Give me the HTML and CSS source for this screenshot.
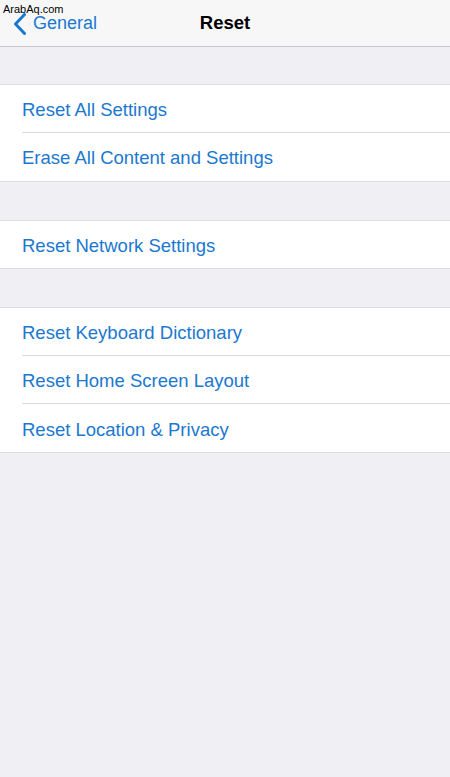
FILE: index.html
```html
<!DOCTYPE html>
<html>
<head>
<meta charset="utf-8">
<link rel="stylesheet" href="styles.css">
</head>
<body>
<div class="watermark">ArabAq.com</div>
<header class="nav">
  <div class="back">
    <svg class="chev" width="14" height="22" viewBox="0 0 14 22"><path d="M11.5 1.5 L2.5 11 L11.5 20.5" fill="none" stroke="#1b78d0" stroke-width="3" stroke-linecap="round" stroke-linejoin="round"/></svg>
    <span>General</span>
  </div>
  <div class="title">Reset</div>
</header>
<main class="content">
  <section class="group">
    <div class="row">Reset All Settings</div>
    <div class="row">Erase All Content and Settings</div>
  </section>
  <section class="group">
    <div class="row">Reset Network Settings</div>
  </section>
  <section class="group">
    <div class="row">Reset Keyboard Dictionary</div>
    <div class="row">Reset Home Screen Layout</div>
    <div class="row">Reset Location &amp; Privacy</div>
  </section>
</main>
</body>
</html>
```
FILE: styles.css
```css
html, body {
  margin: 0;
  padding: 0;
  background: #efeff4;
  font-family: "Liberation Sans", Arial, sans-serif;
  width: 450px;
  height: 777px;
  overflow: hidden;
}
.watermark {
  position: absolute;
  left: 3px;
  top: 3px;
  font-size: 11px;
  color: #000;
  z-index: 2;
}
.nav {
  height: 46px;
  background: #f7f7f8;
  border-bottom: 1px solid #c9c8cd;
  display: flex;
  align-items: center;
  justify-content: center;
  position: relative;
}
.back {
  position: absolute;
  left: 13px;
  top: 0;
  height: 46px;
  display: flex;
  align-items: center;
  gap: 6px;
  color: #1b78d0;
  font-size: 18px;
}
.chev { margin-top: 1px; }
.title {
  font-weight: bold;
  font-size: 18.5px;
  color: #000;
}
.content {
  padding-top: 37px;
  display: flex;
  flex-direction: column;
  gap: 38px;
}
.group {
  background: #fff;
  border-top: 1px solid #dcdce0;
  border-bottom: 1px solid #dcdce0;
}
.row {
  box-sizing: border-box;
  height: 47px;
  padding-top: 3px;
  display: flex;
  align-items: center;
  margin-left: 22px;
  color: #1b78d0;
  font-size: 18.5px;
}
.row + .row {
  height: 48.7px;
  border-top: 1px solid #dcdce0;
}
```
